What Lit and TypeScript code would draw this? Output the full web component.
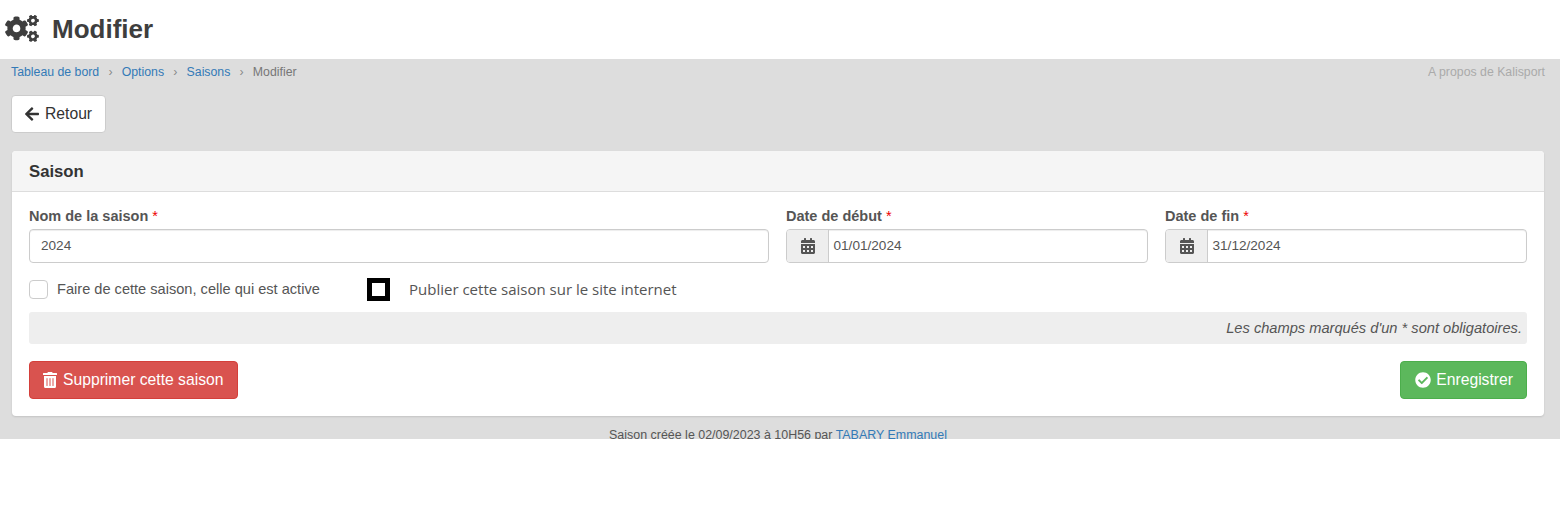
import { LitElement, html, css, svg } from "lit";
import { customElement } from "lit/decorators.js";

const COGS = "M512.1 191l-8.2 14.3c-3 5.3-9.4 7.5-15.1 5.4-11.8-4.4-22.6-10.7-32.1-18.6-4.6-3.8-5.8-10.5-2.8-15.7l8.2-14.3c-6.9-8-12.3-17.3-15.9-27.4h-16.5c-6 0-11.2-4.3-12.2-10.3-2-12-2.1-24.6 0-37.1 1-6 6.2-10.4 12.2-10.4h16.5c3.6-10.1 9-19.4 15.9-27.4l-8.2-14.3c-3-5.2-1.9-11.9 2.8-15.7 9.5-7.9 20.4-14.2 32.1-18.6 5.7-2.1 12.1.1 15.1 5.4l8.2 14.3c10.5-1.9 21.2-1.9 31.7 0L552 6.3c3-5.3 9.4-7.5 15.1-5.4 11.8 4.4 22.6 10.7 32.1 18.6 4.6 3.8 5.8 10.5 2.8 15.7l-8.2 14.3c6.9 8 12.3 17.3 15.9 27.4h16.5c6 0 11.2 4.3 12.2 10.3 2 12 2.1 24.6 0 37.1-1 6-6.2 10.4-12.2 10.4h-16.5c-3.6 10.1-9 19.4-15.9 27.4l8.2 14.3c3 5.2 1.9 11.9-2.8 15.7-9.5 7.9-20.4 14.2-32.1 18.6-5.7 2.1-12.1-.1-15.1-5.4l-8.2-14.3c-10.4 1.9-21.2 1.9-31.7 0zm-10.5-58.8c38.5 29.6 82.4-14.3 52.8-52.8-38.5-29.7-82.4 14.3-52.8 52.8zM386.3 286.1l33.7 16.8c10.1 5.8 14.5 18.1 10.5 29.1-8.9 24.2-26.4 46.4-42.6 65.8-7.4 8.9-20.2 11.1-30.3 5.3l-29.1-16.8c-16 13.7-34.6 24.6-54.9 31.7v33.6c0 11.6-8.3 21.6-19.7 23.6-24.6 4.2-50.4 4.4-75.9 0-11.5-2-20-11.9-20-23.6V418c-20.3-7.2-38.9-18-54.9-31.7L74 403c-10 5.8-22.9 3.6-30.3-5.3-16.2-19.4-33.3-41.6-42.2-65.7-4-10.9.4-23.2 10.5-29.1l33.3-16.8c-3.9-20.9-3.9-42.4 0-63.4L12 205.8c-10.1-5.8-14.6-18.1-10.5-29 8.9-24.2 26-46.4 42.2-65.8 7.4-8.9 20.2-11.1 30.3-5.3l29.1 16.8c16-13.7 34.6-24.6 54.9-31.7V57.1c0-11.5 8.2-21.5 19.6-23.5 24.6-4.2 50.5-4.4 76-.1 11.5 2 20 11.9 20 23.6v33.6c20.3 7.2 38.9 18 54.9 31.7l29.1-16.8c10-5.8 22.9-3.6 30.3 5.3 16.2 19.4 33.2 41.6 42.1 65.8 4 10.9.1 23.2-10 29.1l-33.7 16.8c3.9 21 3.9 42.5 0 63.5zm-117.6 21.1c59.2-77-28.7-164.9-105.7-105.7-59.2 77 28.7 164.9 105.7 105.7zm243.4 182.7l-8.2 14.3c-3 5.3-9.4 7.5-15.1 5.4-11.8-4.4-22.6-10.7-32.1-18.6-4.6-3.8-5.8-10.5-2.8-15.7l8.2-14.3c-6.9-8-12.3-17.3-15.9-27.4h-16.5c-6 0-11.2-4.3-12.2-10.3-2-12-2.1-24.6 0-37.1 1-6 6.2-10.4 12.2-10.4h16.5c3.6-10.1 9-19.4 15.9-27.4l-8.2-14.3c-3-5.2-1.9-11.9 2.8-15.7 9.5-7.9 20.4-14.2 32.1-18.6 5.7-2.1 12.1.1 15.1 5.4l8.2 14.3c10.5-1.9 21.2-1.9 31.7 0l8.2-14.3c3-5.3 9.4-7.5 15.1-5.4 11.8 4.4 22.6 10.7 32.1 18.6 4.6 3.8 5.8 10.5 2.8 15.7l-8.2 14.3c6.9 8 12.3 17.3 15.9 27.4h16.5c6 0 11.2 4.3 12.2 10.3 2 12 2.1 24.6 0 37.1-1 6-6.2 10.4-12.2 10.4h-16.5c-3.6 10.1-9 19.4-15.9 27.4l8.2 14.3c3 5.2 1.9 11.9-2.8 15.7-9.5 7.9-20.4 14.2-32.1 18.6-5.7 2.1-12.1-.1-15.1-5.4l-8.2-14.3c-10.4 1.9-21.2 1.9-31.7 0zM501.6 431c38.5 29.6 82.4-14.3 52.8-52.8-38.5-29.6-82.4 14.3-52.8 52.8z";
const ARROW = "M257.5 445.1l-22.2 22.2c-9.4 9.4-24.6 9.4-33.9 0L7 273c-9.4-9.4-9.4-24.6 0-33.9L201.4 44.7c9.4-9.4 24.6-9.4 33.9 0l22.2 22.2c9.5 9.5 9.3 25-.4 34.3L136.6 216H424c13.3 0 24 10.7 24 24v32c0 13.3-10.7 24-24 24H136.6l120.5 114.8c9.8 9.3 10 24.8.4 34.3z";
const CAL = "M0 464c0 26.5 21.5 48 48 48h352c26.5 0 48-21.5 48-48V192H0v272zm320-196c0-6.6 5.4-12 12-12h40c6.6 0 12 5.4 12 12v40c0 6.6-5.4 12-12 12h-40c-6.6 0-12-5.4-12-12v-40zm0 128c0-6.6 5.4-12 12-12h40c6.6 0 12 5.4 12 12v40c0 6.6-5.4 12-12 12h-40c-6.6 0-12-5.4-12-12v-40zM192 268c0-6.6 5.4-12 12-12h40c6.6 0 12 5.4 12 12v40c0 6.6-5.4 12-12 12h-40c-6.6 0-12-5.4-12-12v-40zm0 128c0-6.6 5.4-12 12-12h40c6.6 0 12 5.4 12 12v40c0 6.6-5.4 12-12 12h-40c-6.6 0-12-5.4-12-12v-40zM64 268c0-6.6 5.4-12 12-12h40c6.6 0 12 5.4 12 12v40c0 6.6-5.4 12-12 12H76c-6.6 0-12-5.4-12-12v-40zm0 128c0-6.6 5.4-12 12-12h40c6.6 0 12 5.4 12 12v40c0 6.6-5.4 12-12 12H76c-6.6 0-12-5.4-12-12v-40zM400 64h-48V16c0-8.8-7.2-16-16-16h-32c-8.8 0-16 7.2-16 16v48H160V16c0-8.8-7.2-16-16-16h-32c-8.8 0-16 7.2-16 16v48H48C21.5 64 0 85.5 0 112v48h448v-48c0-26.5-21.5-48-48-48z";
const TRASH = "M32 464a48 48 0 0 0 48 48h288a48 48 0 0 0 48-48V128H32zm272-256a16 16 0 0 1 32 0v224a16 16 0 0 1-32 0zm-96 0a16 16 0 0 1 32 0v224a16 16 0 0 1-32 0zm-96 0a16 16 0 0 1 32 0v224a16 16 0 0 1-32 0zM432 32H312l-9.4-18.7A24 24 0 0 0 281.1 0H166.8a23.72 23.72 0 0 0-21.4 13.3L136 32H16A16 16 0 0 0 0 48v32a16 16 0 0 0 16 16h416a16 16 0 0 0 16-16V48a16 16 0 0 0-16-16z";
const CHECK = "M504 256c0 136.967-111.033 248-248 248S8 392.967 8 256 119.033 8 256 8s248 111.033 248 248zM227.314 387.314l184-184c6.248-6.248 6.248-16.379 0-22.627l-22.627-22.627c-6.248-6.249-16.379-6.249-22.628 0L216 308.118l-70.059-70.059c-6.248-6.248-16.379-6.248-22.628 0l-22.627 22.627c-6.248 6.248-6.248 16.379 0 22.627l104 104c6.249 6.249 16.379 6.249 22.628.001z";

const icon = (d: string, vb: string, cls: string) =>
  html`<svg class=${cls} viewBox=${vb} fill="currentColor" aria-hidden="true">${svg`<path d=${d}></path>`}</svg>`;

@customElement("app-root")
export class AppRoot extends LitElement {
  static styles = css`
    :host {
      display: block;
      width: 1560px;
      height: 516px;
      background: #fff;
      font-family: "Liberation Sans", Arial, sans-serif;
      color: #555;
      overflow: hidden;
    }
    .top {
      height: 59px;
      display: flex;
      align-items: center;
      padding-left: 5px;
      gap: 13px;
      color: #3e3e3e;
    }
    .i-cogs { width: 34px; height: 27px; margin-top: -3px; }
    h1 { margin: -2px 0 0; font-size: 26px; font-weight: 700; line-height: 30px; }
    .main {
      height: 380px;
      overflow: hidden;
      background: #ddd;
      padding: 0 15px 0 11px;
      box-sizing: border-box;
    }
    .crumbs {
      display: flex;
      justify-content: space-between;
      height: 26px;
      align-items: center;
      font-size: 12.3px;
    }
    .trail { display: flex; color: #777; }
    .trail a { color: #337ab7; text-decoration: none; }
    .sep { width: 22.5px; text-align: center; color: #888; }
    .about { color: #aaa; }
    .btn {
      display: inline-flex;
      align-items: center;
      box-sizing: border-box;
      height: 38px;
      border: 1px solid #ccc;
      border-radius: 4px;
      font-size: 15.7px;
      background: #fff;
      color: #333;
      gap: 6px;
    }
    .back { margin-top: 10px; width: 95px; padding-left: 13px; display: flex; }
    .i-arrow { width: 14px; height: 16px; }
    .card {
      margin: 18px 0 0 1px;
      width: 1532px;
      height: 265px;
      box-sizing: border-box;
      background: #fff;
      border-radius: 4px;
      box-shadow: 0 1px 2px rgba(0, 0, 0, 0.12);
      overflow: hidden;
    }
    .card-head {
      height: 41px;
      box-sizing: border-box;
      background: #f5f5f5;
      border-bottom: 1px solid #ddd;
      padding: 1px 17px 0;
      display: flex;
      align-items: center;
      font-size: 16.7px;
      font-weight: 700;
      color: #333;
    }
    .card-body { padding: 14px 17px 0; }
    .fields {
      display: grid;
      grid-template-columns: 740px 362px 362px;
      column-gap: 17px;
    }
    .lbl { font-size: 14.5px; font-weight: 700; line-height: 20px; margin-bottom: 3px; }
    .req { color: #e00; font-weight: 400; }
    .ctrl {
      height: 34px;
      box-sizing: border-box;
      border: 1px solid #ccc;
      border-radius: 4px;
      display: flex;
      align-items: center;
      font-size: 13.6px;
      color: #555;
      box-shadow: inset 0 1px 1px rgba(0, 0, 0, 0.075);
      overflow: hidden;
    }
    .val { padding-left: 11px; margin-top: -1px; }
    .addon {
      width: 42px;
      height: 100%;
      flex: none;
      background: #eee;
      border-right: 1px solid #ccc;
      display: flex;
      align-items: center;
      justify-content: center;
      box-sizing: border-box;
    }
    .date { padding-left: 4.5px; margin-top: -1px; }
    .i-cal { width: 14px; height: 16px; color: #555; }
    .checks {
      display: flex;
      align-items: center;
      height: 23px;
      margin-top: 15px;
    }
    .box {
      width: 19px;
      height: 19px;
      box-sizing: border-box;
      border: 1px solid #ccc;
      border-radius: 4px;
      margin-right: 9px;
    }
    .chk-a { font-size: 14.6px; flex: none; white-space: nowrap; width: 310px; margin-top: -1px; }
    .box2 {
      width: 23px;
      height: 23px;
      box-sizing: border-box;
      border: 5px solid #000;
      background: #fff;
      margin-right: 19px;
    }
    .chk-b { font-family: "Open Sans", "Liberation Sans", sans-serif; font-size: 15px; color: #555; margin-top: -1px; }
    .note {
      margin-top: 11px;
      height: 32px;
      background: #eee;
      border-radius: 3px;
      display: flex;
      align-items: center;
      justify-content: flex-end;
      padding-right: 5px;
      font-size: 14.65px;
      font-style: italic;
    }
    .note span { margin-top: -1px; }
    .actions { display: flex; justify-content: space-between; margin-top: 17px; }
    .danger { background: #d9534f; border-color: #d43f3a; color: #fff; padding: 0 14px 0 13px; }
    .ok { background: #5cb85c; border-color: #4cae4c; color: #fff; padding: 0 13px 0 14px; gap: 5px; }
    .i-trash { width: 14px; height: 16px; }
    .i-check { width: 16px; height: 16px; }
    .foot { text-align: center; font-size: 12.45px; line-height: 16px; margin-top: 11px; }
    .foot a { color: #337ab7; text-decoration: none; }
  `;

  render() {
    return html`
      <div class="top">
        ${icon(COGS, "0 0 640 512", "i-cogs")}
        <h1>Modifier</h1>
      </div>
      <div class="main">
        <div class="crumbs">
          <div class="trail">
            <a href="#">Tableau de bord</a><span class="sep">›</span>
            <a href="#">Options</a><span class="sep">›</span>
            <a href="#">Saisons</a><span class="sep">›</span>
            <span>Modifier</span>
          </div>
          <span class="about">A propos de Kalisport</span>
        </div>
        <div class="btn back">${icon(ARROW, "0 0 448 512", "i-arrow")}Retour</div>
        <section class="card">
          <div class="card-head">Saison</div>
          <div class="card-body">
            <div class="fields">
              <div>
                <div class="lbl">Nom de la saison <span class="req">*</span></div>
                <div class="ctrl"><span class="val">2024</span></div>
              </div>
              <div>
                <div class="lbl">Date de début <span class="req">*</span></div>
                <div class="ctrl">
                  <span class="addon">${icon(CAL, "0 0 448 512", "i-cal")}</span>
                  <span class="date">01/01/2024</span>
                </div>
              </div>
              <div>
                <div class="lbl">Date de fin <span class="req">*</span></div>
                <div class="ctrl">
                  <span class="addon">${icon(CAL, "0 0 448 512", "i-cal")}</span>
                  <span class="date">31/12/2024</span>
                </div>
              </div>
            </div>
            <div class="checks">
              <span class="box"></span>
              <span class="chk-a">Faire de cette saison, celle qui est active</span>
              <span class="box2"></span>
              <span class="chk-b">Publier cette saison sur le site internet</span>
            </div>
            <div class="note"><span>Les champs marqués d'un * sont obligatoires.</span></div>
            <div class="actions">
              <div class="btn danger">${icon(TRASH, "0 0 448 512", "i-trash")}Supprimer cette saison</div>
              <div class="btn ok">${icon(CHECK, "0 0 512 512", "i-check")}Enregistrer</div>
            </div>
          </div>
        </section>
        <div class="foot">Saison créée le 02/09/2023 à 10H56 par <a href="#">TABARY Emmanuel</a></div>
      </div>
    `;
  }
}
